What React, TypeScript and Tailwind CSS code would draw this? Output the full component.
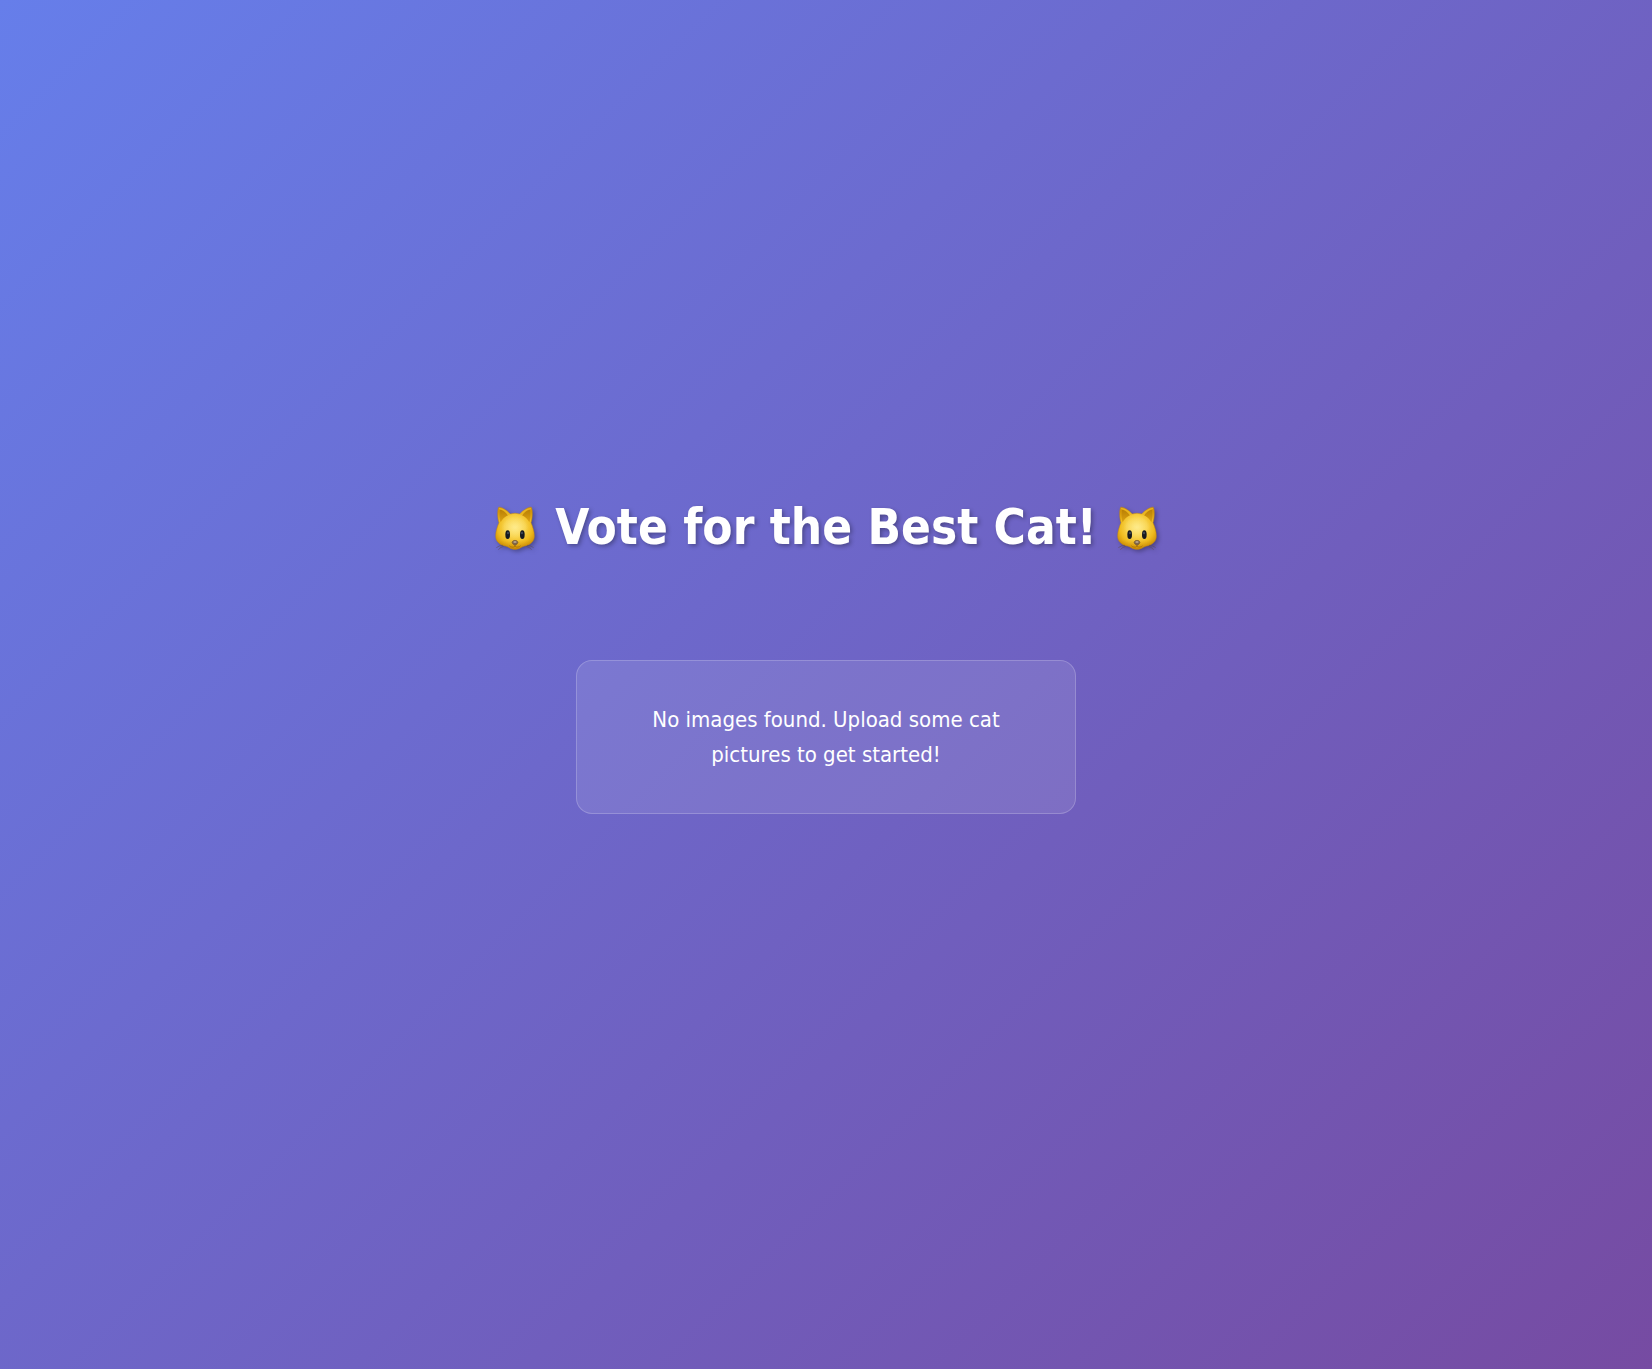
import { useId } from "react";

function CatFace() {
  const id = useId();
  const face = `${id}-face`;
  const shade = `${id}-shade`;
  const ear = `${id}-ear`;
  const glow = `${id}-glow`;
  return (
    <svg
      role="img"
      aria-label="Cat face"
      viewBox="18 20 144 144"
      className="size-12 shrink-0 overflow-visible drop-shadow-[2px_2px_2px_rgba(0,0,0,0.3)]"
    >
      <defs>
        <radialGradient id={face} gradientUnits="userSpaceOnUse" cx="90" cy="90" r="68">
          <stop offset="0" stopColor="#fde26a" />
          <stop offset="0.45" stopColor="#f8d24a" />
          <stop offset="0.75" stopColor="#efbb1e" />
          <stop offset="1" stopColor="#d39508" />
        </radialGradient>
        <linearGradient id={shade} x1="0" y1="0" x2="0" y2="1">
          <stop offset="0.65" stopColor="#c47f00" stopOpacity="0" />
          <stop offset="1" stopColor="#b87400" stopOpacity="0.5" />
        </linearGradient>
        <linearGradient id={ear} x1="0" y1="0" x2="0" y2="1">
          <stop offset="0" stopColor="#b97f05" />
          <stop offset="1" stopColor="#dca312" />
        </linearGradient>
        <radialGradient id={glow}>
          <stop offset="0" stopColor="#fff0a0" stopOpacity="0.6" />
          <stop offset="1" stopColor="#fff0a0" stopOpacity="0" />
        </radialGradient>
      </defs>
      <path
        d="M41 30C45 27 64 36 76 50Q90 45 104 50C116 36 135 27 139 30C143 38 143 62 138 76C143 88 148 102 148 116C148 133 136 142 119 146C109 148 103 156 90 156C77 156 71 148 61 146C44 142 32 133 32 116C32 102 37 88 42 76C37 62 37 38 41 30Z"
        fill={`url(#${face})`}
        stroke="#c98a08"
        strokeWidth="1.5"
      />
      <path
        d="M42 76C37 88 32 102 32 116C32 133 44 142 61 146C71 148 77 156 90 156C103 156 109 148 119 146C136 142 148 133 148 116C148 102 143 88 138 76Z"
        fill={`url(#${shade})`}
      />
      <path d="M45 37C53 38 63 44 69 54C60 58 52 65 47 75C42 62 43 46 45 37Z" fill={`url(#${ear})`} />
      <path d="M135 37C127 38 117 44 111 54C120 58 128 65 133 75C138 62 137 46 135 37Z" fill={`url(#${ear})`} />
      <path d="M44 34C54 36 65 42 72 52M136 34C126 36 115 42 108 52" fill="none" stroke="#e9b51f" strokeWidth="4" strokeLinecap="round" />
      <ellipse cx="90" cy="90" rx="40" ry="32" fill={`url(#${glow})`} />
      <ellipse cx="68" cy="112" rx="7" ry="13" fill="#171a20" />
      <ellipse cx="112" cy="112" rx="7" ry="13" fill="#171a20" />
      <ellipse cx="69" cy="107" rx="2" ry="4" fill="#536172" />
      <ellipse cx="111" cy="107" rx="2" ry="4" fill="#536172" />
      <path d="M90 141V147C84 151 78 150 74 146M90 147C96 151 102 150 106 146" fill="none" stroke="#a46d05" strokeWidth="2" strokeLinecap="round" />
      <path d="M81 135Q83 129 90 129Q97 129 99 135Q98 141 90 144Q82 141 81 135Z" fill="#7f6549" stroke="#6b4d28" strokeWidth="1.5" />
      <ellipse cx="90" cy="134" rx="5" ry="3" fill="#b3a28c" />
      <path
        d="M54 144Q43 144 34 151M56 147Q47 149 40 157M126 144Q137 144 146 151M124 147Q133 149 140 157"
        fill="none"
        stroke="#5f4b50"
        strokeOpacity="0.8"
        strokeWidth="2"
      />
    </svg>
  );
}

export default function App() {
  return (
    <main className="flex min-h-screen flex-col items-center justify-center bg-[linear-gradient(135deg,#667eea_0%,#764ba2_100%)] px-5 pb-[66px] font-[Tahoma,'DejaVu_Sans_Condensed','Noto_Sans',sans-serif] text-white">
      <h1 className="mb-[94px] flex items-center justify-center gap-4 text-center text-[49px] leading-19 font-bold text-shadow-[2px_2px_4px_rgba(0,0,0,0.3)]">
        <CatFace />
        <span>Vote for the Best Cat!</span>
        <CatFace />
      </h1>
      <section className="w-full max-w-[500px] rounded-2xl border border-white/20 bg-white/10 px-10 py-[41px] text-center">
        <p className="mx-auto max-w-96 text-[22px] leading-[35px]">
          No images found. Upload some cat pictures to get started!
        </p>
      </section>
    </main>
  );
}
